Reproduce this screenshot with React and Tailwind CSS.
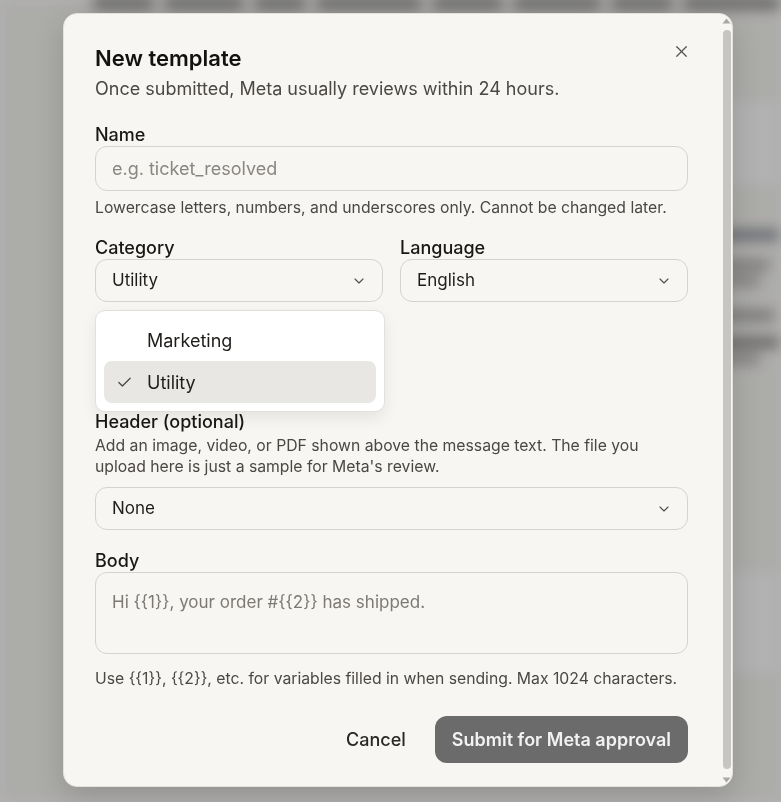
import { Check, ChevronDown, X } from "lucide-react";

const font = { fontFamily: "Inter, 'Noto Sans', sans-serif" };

function SelectBox({ value }) {
  return (
    <div className="flex h-[43px] items-center justify-between rounded-[12px] border border-[#d6d3ce] bg-[#f7f6f3] pl-4 pr-[15px] text-[17px] text-[#1f1d1a]">
      <span>{value}</span>
      <ChevronDown size={16} strokeWidth={1.75} className="text-[#55524e]" />
    </div>
  );
}

function Label({ children }) {
  return <div className="text-[18px] font-medium leading-[22px] text-[#1a1815]">{children}</div>;
}

// Soft grey stroke standing in for a line of out-of-focus page text
function Blot({ w, h = 10, tone = "bg-[#8a8986]" }) {
  return <div className={`rounded-full ${tone}`} style={{ width: w, height: h }} />;
}

export default function App() {
  return (
    <div style={font} className="relative h-[802px] w-[781px] overflow-hidden">
      {/* page behind the modal */}
      <div className="absolute inset-0 bg-[#f7f6f3] blur-[7px]">
        <div className="-mt-[3px] flex gap-2 pl-[92px]">
          <Blot w={70} h={12} />
          <Blot w={90} h={12} />
          <Blot w={60} h={12} />
          <Blot w={120} h={12} />
          <Blot w={80} h={12} />
          <Blot w={100} h={12} />
          <Blot w={70} h={12} />
          <Blot w={110} h={12} />
        </div>
        <div className="ml-[690px] mt-[88px] flex flex-col">
          <div className="h-[92px] rounded-lg border border-[#dcd9d4] bg-white" />
          <div className="mt-[42px]"><Blot w={90} h={8} tone="bg-[#6f7683]" /></div>
          <div className="mt-[22px] flex flex-col gap-[8px]">
            <Blot w={80} h={8} tone="bg-[#9a9996]" />
            <Blot w={70} h={8} tone="bg-[#a3a29f]" />
          </div>
          <div className="mt-[26px]"><Blot w={85} h={9} tone="bg-[#9a9996]" /></div>
          <div className="mt-[18px] flex flex-col gap-[8px]">
            <Blot w={90} h={9} tone="bg-[#7d7c79]" />
            <Blot w={70} h={8} tone="bg-[#a3a29f]" />
          </div>
          <div className="mt-[205px] h-[110px] rounded-lg border border-[#dcd9d4] bg-white" />
        </div>
      </div>
      <div className="absolute inset-0 bg-black/30" />

      {/* modal */}
      <div className="fixed inset-0 flex items-start pl-[63px] pt-[13px]">
        <div className="flex h-[774px] w-[670px] overflow-hidden rounded-[14px] border border-[#e4e2dd] bg-[#f7f6f3] shadow-[0_10px_30px_rgba(0,0,0,0.15)]">
          <div className="relative min-w-0 flex-1 pb-8 pl-[31px] pr-[33px] pt-[30px]">
            <button className="absolute right-[30px] top-[28px] text-[#55524e]">
              <X size={19} strokeWidth={1.5} />
            </button>

            <h2 className="text-[22px] font-semibold leading-[28px] text-[#141210]">New template</h2>
            <p className="mt-[4px] text-[18px] leading-[26px] text-[#4b4844]">
              Once submitted, Meta usually reviews within 24 hours.
            </p>

            <div className="mt-[22px]">
              <Label>Name</Label>
              <div className="flex h-[45px] items-center rounded-[12px] border border-[#d6d3ce] bg-[#f7f6f3] px-4 text-[18px] text-[#8a8681]">
                e.g. ticket_resolved
              </div>
              <p className="mt-[7px] text-[15.75px] leading-[20px] text-[#4b4844]">
                Lowercase letters, numbers, and underscores only. Cannot be changed later.
              </p>
            </div>

            <div className="mt-[19px] grid grid-cols-2 gap-[17px]">
              <div className="relative">
                <Label>Category</Label>
                <SelectBox value="Utility" />
                <div className="absolute left-0 top-[calc(100%+8px)] z-10 w-[290px] rounded-[10px] border border-[#e3e0db] bg-white p-2 shadow-[0_6px_16px_rgba(0,0,0,0.08)]">
                  <div className="flex h-[42px] items-center pl-[43px] text-[18px] text-[#1f1d1a]">Marketing</div>
                  <div className="relative flex h-[42px] items-center rounded-[8px] bg-[#e9e7e3] pl-[43px] text-[18px] text-[#1f1d1a]">
                    <Check size={17} strokeWidth={1.75} className="absolute left-[12px] text-[#4a4643]" />
                    Utility
                  </div>
                </div>
              </div>
              <div>
                <Label>Language</Label>
                <SelectBox value="English" />
              </div>
            </div>

            <div className="h-[109px]" />

            <div>
              <Label>Header (optional)</Label>
              <p className="mt-[2px] text-[15.75px] leading-[21px] text-[#4b4844]">
                Add an image, video, or PDF shown above the message text. The file you upload here is just a sample for Meta&apos;s review.
              </p>
              <div className="mt-[10px]">
                <SelectBox value="None" />
              </div>
            </div>

            <div className="mt-[20px]">
              <Label>Body</Label>
              <div className="h-[82px] rounded-[12px] border border-[#d6d3ce] bg-[#f7f6f3] px-4 pt-[17px] text-[17px] leading-[24px] text-[#7d7974]">
                Hi {"{{1}}"}, your order #{"{{2}}"} has shipped.
              </div>
              <p className="mt-[15px] text-[15.75px] leading-[20px] text-[#4b4844]">
                Use {"{{1}}"}, {"{{2}}"}, etc. for variables filled in when sending. Max 1024 characters.
              </p>
            </div>

            <div className="mt-[27px] flex items-center justify-end gap-[29px]">
              <button className="text-[18px] font-medium text-[#2a2825]">Cancel</button>
              <button className="h-[47px] rounded-[12px] bg-[#6b6b6b] px-[17px] text-[18px] font-semibold text-[#f2f2f2]">
                Submit for Meta approval
              </button>
            </div>
          </div>

          {/* scrollbar of the modal body */}
          <div className="flex w-[11px] shrink-0 flex-col items-center pb-[3px] pt-[4px]">
            <svg width="9" height="6" viewBox="0 0 9 6" className="shrink-0">
              <path d="M4.5 0.5 L8.5 5.5 L0.5 5.5 Z" fill="#a9a8a4" />
            </svg>
            <div className="mt-[6px] w-[8px] flex-1 rounded-full bg-[#c6c5c1]" />
            <svg width="9" height="6" viewBox="0 0 9 6" className="mt-[8px] shrink-0">
              <path d="M0.5 0.5 L8.5 0.5 L4.5 5.5 Z" fill="#a9a8a4" />
            </svg>
          </div>
        </div>
      </div>
    </div>
  );
}
